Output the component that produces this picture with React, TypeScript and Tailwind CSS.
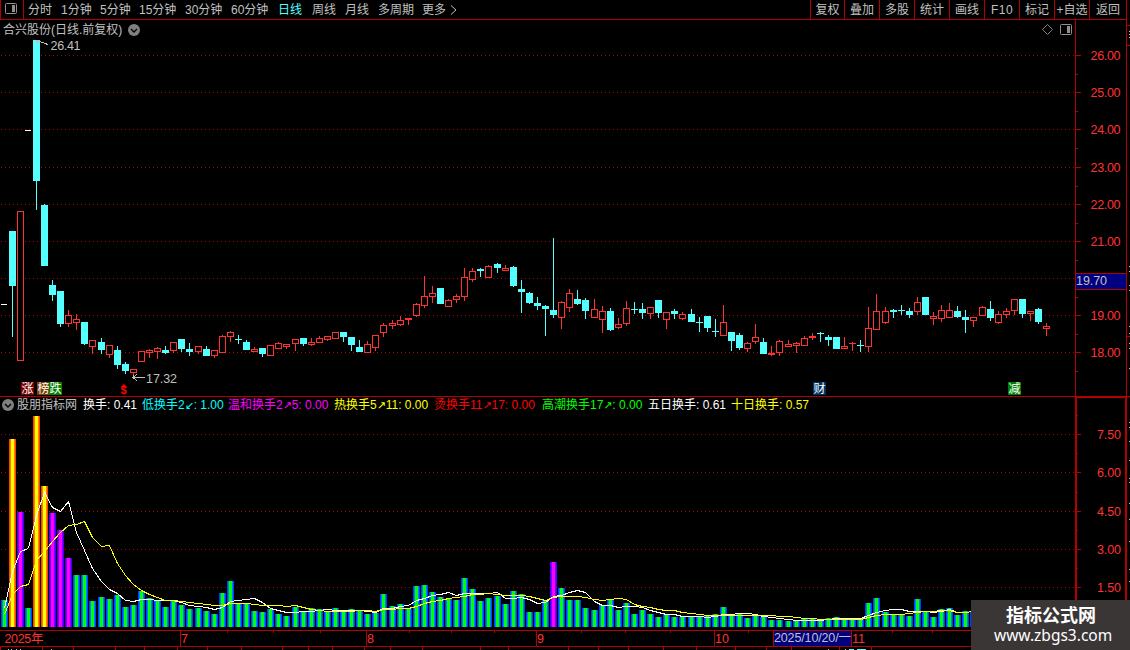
import React from "react";
import clsx from "clsx";

type Candle = {
    up: boolean;
    high: number;
    top: number;
    bottom: number;
    low: number;
};

// 每行: 方向 最高 实体上沿 实体下沿 最低 ("-" 为一字线)
const CANDLE_DATA = `
- 304|d 231 231 286 337|u 211 211 361 361|- 130|d 40 40 181 210|d 204 205 266 266|d 280 285 295 301|d 291 291 324 327
u 310 315 324 327|u 314 319 323 330|d 322 322 344 345|u 340 340 347 354|d 338 342 350 354|u 345 345 355 358|d 346 350 365 369
d 362 364 371 374|u 369 369 373 377|u 351 351 362 362|u 349 350 353 358|u 347 348 352 359|d 346 350 353 354|u 342 342 351 353
d 339 339 349 352|d 343 349 352 356|u 346 346 352 354|d 346 349 356 356|u 350 350 356 358|u 335 336 353 353|u 331 332 337 342
d 335 339 340 344|d 340 342 350 350|u 347 349 352 352|d 348 348 354 357|u 345 345 356 356|u 342 343 349 349|u 344 344 347 349
u 339 339 344 351|d 338 338 344 346|u 338 342 345 346|u 336 338 343 343|u 336 336 340 341|u 332 332 339 339|d 332 332 337 342
d 337 337 345 351|d 340 347 352 352|u 341 344 353 353|u 335 335 348 351|u 323 325 333 337|u 320 323 326 329|u 316 320 325 326
u 318 318 320 325|u 303 304 316 317|u 276 296 306 308|u 286 293 297 303|d 288 288 304 304|u 299 300 307 307|u 294 296 300 303
u 268 277 297 301|u 268 271 280 282|d 268 269 271 277|u 265 266 278 278|d 263 264 268 273|u 265 268 271 271|d 266 267 286 287
d 280 289 292 313|d 292 293 303 304|d 297 303 306 310|d 305 306 309 336|d 238 310 315 318|u 301 302 318 329|u 289 293 308 312
d 290 299 304 305|d 298 300 311 319|u 299 309 318 318|u 306 311 320 333|d 308 311 330 331|u 318 324 328 329|u 301 308 324 326
d 302 309 310 314|d 303 309 313 319|u 307 307 314 319|d 300 300 313 318|u 312 312 320 329|d 309 311 314 319|u 312 314 319 320
d 309 314 322 322|d 317 322 323 332|d 316 316 328 332|d 319 331 332 337|u 305 322 336 336|d 332 332 341 351|d 333 335 348 350
u 342 343 349 352|u 324 337 342 344|d 338 342 354 354|u 346 353 355 356|u 340 341 353 356|u 340 344 347 347|u 342 343 346 353
u 336 338 346 346|u 333 336 338 340|d 332 333 334 342|d 335 337 340 346|d 337 337 349 349|u 337 346 349 349|u 342 343 344 351
d 340 345 346 352|u 307 328 347 352|u 294 311 330 330|u 307 311 323 324|d 309 310 312 318|d 305 310 311 315|d 308 311 315 318
u 297 302 312 315|d 297 297 315 315|u 312 316 319 325|u 305 310 319 322|u 303 310 318 318|d 306 311 317 318|d 310 317 320 333
u 317 317 321 327|u 306 307 316 316|d 301 309 318 321|u 311 314 323 324|u 308 311 315 318|u 299 299 311 315|d 299 299 314 318
u 311 311 314 321|d 308 309 322 324|u 323 326 329 336`;

const candles: (Candle | number)[] = CANDLE_DATA.trim()
    .split(/[|\n]/)
    .map((row) => {
        const [kind, ...n] = row.split(" ");
        if (kind === "-") return Number(n[0]);
        const [high, top, bottom, low] = n.map(Number);
        return { up: kind === "u", high, top, bottom, low };
    });

// 换手柱顶端
const turnover = [
    600, 439, 512, 608, 416, 486, 513, 530, 558, 575, 575, 601, 597, 599, 595, 607, 605, 591, 598, 601,
    607, 601, 605, 609, 608, 611, 614, 593, 581, 603, 603, 611, 612, 609, 614, 616, 607, 611, 608, 609,
    612, 608, 612, 609, 611, 614, 613, 594, 606, 604, 608, 586, 585, 592, 597, 599, 600, 578, 589, 601,
    598, 596, 604, 591, 594, 612, 612, 600, 562, 588, 600, 600, 608, 610, 605, 600, 610, 603, 614, 610,
    614, 617, 614, 617, 617, 617, 617, 616, 614, 607, 614, 614, 618, 615, 617, 620, 620, 621, 620, 619,
    619, 619, 618, 617, 619, 619, 619, 603, 598, 612, 615, 615, 616, 599, 612, 617, 609, 608, 615, 611, 612,
];
const BASE = 627;

// 每12根左右多出1像素
const extra = [12, 24, 36, 48, 61, 73, 85, 97, 109, 121];
const barX = (i: number) => 1 + i * 8 + extra.filter((e) => i >= e).length;

const average = (days: number, head: number[]) =>
    turnover
        .map((_, i) => {
            const y =
                i < head.length
                    ? head[i]
                    : turnover.slice(i - days + 1, i + 1).reduce((a, b) => a + b, 0) / days;
            return `${barX(i) + 3.5},${Math.round(y) + 0.5}`;
        })
        .join(" ");

const ma5 = average(5, [608, 571, 551, 548]);
const ma10 = average(10, [614, 594, 586, 584, 560, 551, 541, 532, 525]);

const barColors = (i: number) => {
    if ([1, 4, 5].includes(i)) return ["#ff4000", "#ff8000", "#ffff00"];
    if ([2, 6, 7, 8, 68].includes(i)) return ["#4000ff", "#8000ff", "#ff00ff"];
    return ["#0040ff", "#0080ff", "#00ff00"];
};

const periods = [
    { name: "分时", box: "w-[33px]" },
    { name: "1分钟", box: "w-[39px]" },
    { name: "5分钟", box: "w-[39px]" },
    { name: "15分钟", box: "w-[46px]" },
    { name: "30分钟", box: "w-[46px]" },
    { name: "60分钟", box: "w-[47px]" },
    { name: "日线", box: "w-[34px] text-[#54ffff]" },
    { name: "周线", box: "w-[33px]" },
    { name: "月线", box: "w-[33px]" },
    { name: "多周期", box: "w-[44px]" },
    { name: "更多", box: "w-[26px]" },
];

const tools = ["复权", "叠加", "多股", "统计", "画线", "F10", "标记", "+自选", "返回"];

const legends = [
    { label: "股朋指标网", box: "w-[66px] text-[#c0c0c0]" },
    { label: "换手: 0.41", box: "w-[59px] text-white" },
    { label: "低换手2↙: 1.00", box: "w-[86px] text-[#00ffff]" },
    { label: "温和换手2↗5: 0.00", box: "w-[106px] text-[#ff00ff]" },
    { label: "热换手5↗11: 0.00", box: "w-[100px] text-[#ffff00]" },
    { label: "烫换手11↗17: 0.00", box: "w-[108px] text-[#ff0000]" },
    { label: "高潮换手17↗: 0.00", box: "w-[106px] text-[#00ff00]" },
    { label: "五日换手: 0.61", box: "w-[83px] text-white" },
    { label: "十日换手: 0.57", box: "w-[80px] text-[#ffff00]" },
];

const priceLines = [55, 92, 129, 167, 204, 241, 278, 315, 352];
const volumeLines = [434, 472, 511, 549, 587];

function GridLine({ y }: { y: number }) {
    return <line x1="1" x2="1075" y1={y + 0.5} y2={y + 0.5} stroke="#b00000" strokeDasharray="1 3" />;
}

function Fold() {
    return (
        <svg width="12" height="12" viewBox="0 0 12 12">
            <circle cx="6" cy="6" r="6" fill="#808080" />
            <path d="M3 5l3 3 3-3" fill="none" stroke="#000" strokeWidth="1.4" />
        </svg>
    );
}

function PanelIcon({ className }: { className?: string }) {
    return (
        <svg className={className} width="12" height="11" viewBox="0 0 12 11">
            <rect x="0.5" y="0.5" width="11" height="10" rx="1" fill="none" stroke="#909090" />
            <rect x="7" y="2" width="3" height="7" fill="#909090" />
        </svg>
    );
}

function Toolbar() {
    return (
        <header className="flex h-5 w-[1127px] border-r border-b border-l border-[#b40000] text-[#c0c0c0]">
            <div className="w-[23px] border-r border-[#b40000] pt-[3px] pl-1">
                <PanelIcon />
            </div>
            <nav className="flex flex-1 items-center pl-1">
                {periods.map((p) => (
                    <span key={p.name} className={p.box}>
                        {p.name}
                    </span>
                ))}
                <svg width="7" height="10" viewBox="0 0 7 10" className="ml-0.5">
                    <path d="M1 0.5l5 4.5-5 4.5" fill="none" stroke="#c0c0c0" />
                </svg>
            </nav>
            {tools.map((t, i) => (
                <div
                    key={t}
                    className={clsx(
                        "flex items-center justify-center border-l border-[#b40000]",
                        i === 0 ? "w-[34px]" : i === 8 ? "w-[37px]" : "w-[35px]",
                        t === "F10" && "tracking-[0.5px]"
                    )}
                >
                    {t}
                </div>
            ))}
        </header>
    );
}

function CandleShape({ item, x }: { item: Candle | number; x: number }) {
    if (typeof item === "number") return <rect x={x} y={item} width="6" height="1" fill="#fff" />;
    const color = item.up ? "#ff3232" : "#54ffff";
    const { high, top, bottom, low } = item;
    return (
        <g fill={color}>
            <rect x={x + 3} y={high} width="1" height={top - high} />
            <rect x={x + 3} y={bottom} width="1" height={low - bottom} />
            {item.up && bottom - top > 2 ? (
                <rect x={x + 0.5} y={top + 0.5} width="6" height={bottom - top - 1} fill="#000" stroke={color} />
            ) : (
                <rect x={x} y={top} width="7" height={bottom - top} />
            )}
        </g>
    );
}

function Mark({ text, className }: { text: string; className: string }) {
    return (
        <span
            className={clsx(
                "absolute top-[362px] flex h-[13px] w-[13px] items-center justify-center text-[12px] leading-none text-white",
                className
            )}
        >
            {text}
        </span>
    );
}

function PricePanel() {
    return (
        <section className="relative flex h-[377px] border-b border-[#b40000]">
            <div className="w-[1075px]">
                <div className="flex h-[19px] items-center gap-[5px] pl-[3px] text-[#c0c0c0]">
                    <span className="w-[120px]">合兴股份(日线.前复权)</span>
                    <Fold />
                    <svg width="11" height="11" viewBox="0 0 11 11" className="ml-auto">
                        <path d="M5.5 0.5l5 5-5 5-5-5z" fill="none" stroke="#808080" />
                    </svg>
                    <PanelIcon className="mr-[3px] ml-[2px]" />
                </div>
                <svg width="1075" height="357" viewBox="0 39 1075 357" className="block">
                    <g shapeRendering="crispEdges">
                        {priceLines.map((y) => (
                            <GridLine key={y} y={y} />
                        ))}
                        {candles.map((c, i) => (
                            <CandleShape key={i} item={c} x={barX(i)} />
                        ))}
                    </g>
                    <g fill="none" stroke="#c0c0c0" shapeRendering="crispEdges">
                        <path d="M38 41l10 3.5M36 40.500h4M37.500 40v4" />
                        <path d="M133 377.500h12M137 374l-4 3.500 4 3.500M133.500 375v4" />
                    </g>
                    <g fill="#c0c0c0" fontSize="12.500">
                        <text x="50.500" y="50" textLength="30">26.41</text>
                        <text x="146" y="383" textLength="31">17.32</text>
                    </g>
                    <text x="120.500" y="393.500" fill="#ff0000" fontSize="11" fontWeight="bold">$</text>
                    <path d="M121 387l3-3 3 3z" fill="#ff0000" />
                </svg>
            </div>
            <svg width="55" height="376" viewBox="1075 20 55 376" className="block" fill="#ff3232">
                <g fill="#b40000">
                    <rect x="1075" y="20" width="1" height="376" />
                    <rect x="1126" y="20" width="1" height="376" />
                    {priceLines.map((y) => (
                        <React.Fragment key={y}>
                            <rect x="1076" y={y} width="5" height="1" />
                            <rect x="1076" y={y + 19} width="2" height="1" />
                        </React.Fragment>
                    ))}
                    <rect x="1127" y="25" width="3" height="1" />
                    <rect x="1127" y="45" width="3" height="1" />
                    <rect x="1127" y="336" width="3" height="1" />
                </g>
                <g fill="#c0c0c0">
                    {[31, 34, 37, 266, 271, 285, 290, 326, 333, 343, 348, 368].map((y) => (
                        <rect key={y} x="1129" y={y} width="1" height="1" />
                    ))}
                </g>
                {priceLines.map((y, i) =>
                    i === 6 ? null : (
                        <text key={y} x="1090.500" y={y + 5} fontSize="12.500" textLength="30">
                            {(26 - i).toFixed(2)}
                        </text>
                    )
                )}
                <rect x="1075.500" y="273.500" width="51" height="16" fill="#000080" stroke="#b40000" />
                <text x="1076" y="285" fill="#c0c0c0" fontSize="12.500" textLength="31">19.70</text>
            </svg>
            <Mark text="涨" className="left-[21px] bg-[#800000]" />
            <Mark text="榜" className="left-[37px] bg-[#804000]" />
            <Mark text="跌" className="left-[49px] bg-[#008000]" />
            <Mark text="财" className="left-[813px] bg-[#003264]" />
            <Mark text="减" className="left-[1008px] bg-[#008000]" />
        </section>
    );
}

// 箭头单独收窄
function LegendText({ text }: { text: string }) {
    return (
        <>
            {text.split(/([↗↙])/).map((part, i) =>
                part === "↗" || part === "↙" ? (
                    <span key={i} className="inline-block w-[9px] text-center font-['DejaVu_Sans'] text-[11px]">
                        {part}
                    </span>
                ) : (
                    part
                )
            )}
        </>
    );
}

function TurnoverPanel() {
    return (
        <section className="flex h-[233px]">
            <div className="w-[1075px]">
                <div className="flex h-4 items-center pl-0.5">
                    <span className="w-[15px]">
                        <Fold />
                    </span>
                    {legends.map((l) => (
                        <span key={l.label} className={clsx("h-3", l.box)}>
                            <LegendText text={l.label} />
                        </span>
                    ))}
                </div>
                <svg width="1075" height="217" viewBox="0 413 1075 217" className="block" shapeRendering="crispEdges">
                    {volumeLines.map((y) => (
                        <GridLine key={y} y={y} />
                    ))}
                    {turnover.map((y, i) => {
                        const [edge, mid, core] = barColors(i);
                        const x = barX(i);
                        return (
                            <g key={i}>
                                <rect x={x} y={y} width="7" height={BASE - y} fill={edge} />
                                <rect x={x + 1} y={y} width="5" height={BASE - y} fill={mid} />
                                <rect x={x + 2} y={y} width="3" height={BASE - y} fill={core} />
                            </g>
                        );
                    })}
                    <polyline points={ma5} fill="none" stroke="#fff" />
                    <polyline points={ma10} fill="none" stroke="#ffff00" />
                </svg>
            </div>
            <svg width="55" height="233" viewBox="1075 397 55 233" className="block">
                <g fill="#b40000">
                    <rect x="1075" y="397" width="2" height="233" />
                    <rect x="1125" y="397" width="2" height="233" />
                    <rect x="1075" y="397" width="52" height="1" />
                    {volumeLines.map((y) => (
                        <React.Fragment key={y}>
                            <rect x="1077" y={y} width="4" height="1" />
                            <rect x="1077" y={y - 19} width="1" height="1" />
                        </React.Fragment>
                    ))}
                </g>
                {volumeLines.map((y, i) => (
                    <text key={y} x="1097" y={y + 5} fill="#ff3232" fontSize="12.500" textLength="24">
                        {(7.5 - i * 1.5).toFixed(2)}
                    </text>
                ))}
                <g fill="#c0c0c0">
                    {[422, 427, 441, 460, 478, 482, 503, 519, 541, 569, 581].map((y) => (
                        <rect key={y} x="1129" y={y} width="1" height="1" />
                    ))}
                </g>
            </svg>
        </section>
    );
}

function TimeAxis() {
    return (
        <svg width="1130" height="20" viewBox="0 630 1130 20" className="block" fill="#ff3232" fontSize="12.500">
            <g fill="#b40000">
                <rect x="0" y="630" width="1130" height="1" />
                <rect x="0" y="646" width="1130" height="1" />
                {[180, 366, 536, 714].map((x) => (
                    <rect key={x} x={x} y="630" width="1" height="16" />
                ))}
                {[227, 273, 320, 409, 451, 494, 581, 625, 670, 748, 892, 932].map((x) => (
                    <rect key={x} x={x} y="631" width="1" height="2" />
                ))}
                {[
                    0, 42, 73, 115, 144, 177, 207, 241, 282, 308, 332, 364, 390, 422, 480, 508, 568, 598, 628, 663,
                    696, 735, 766, 791, 839, 871,
                ].map((x) => (
                    <rect key={x} x={x} y="647" width="1" height="3" />
                ))}
            </g>
            <rect x="773.500" y="630.500" width="78" height="16" fill="#000080" stroke="#b40000" />
            <text x="4.500" y="643" textLength="39">2025年</text>
            <text x="181" y="643">7</text>
            <text x="367" y="643">8</text>
            <text x="537" y="643">9</text>
            <text x="715" y="643" textLength="14">10</text>
            <text x="852" y="643" textLength="13">11</text>
            <text x="774" y="642" fill="#c0c0c0" textLength="77">2025/10/20/一</text>
            {/* 下一行露出的顶部 */}
            <g fill="#c0c0c0">
                {[8, 11, 16, 20, 51, 828].map((x) => (
                    <rect key={x} x={x} y="649" width="1" height="1" />
                ))}
                <g fill="#54ffff">
                    <rect x="845" y="649" width="1" height="1" />
                    <rect x="849" y="649" width="5" height="1" />
                    <rect x="857" y="649" width="9" height="1" />
                </g>
            </g>
        </svg>
    );
}

export default function App() {
    return (
        <div className="relative h-[650px] w-[1130px] overflow-hidden bg-black font-['Liberation_Sans','Noto_Sans_CJK_SC',sans-serif] text-[12px] leading-none whitespace-nowrap">
            <Toolbar />
            <PricePanel />
            <TurnoverPanel />
            <TimeAxis />

            {/* 水印 */}
            <div className="absolute top-[600px] left-[971px] flex h-[50px] w-[159px] flex-col items-start bg-[#3a3636] pt-[7px] text-white">
                <span className="ml-[35px] text-[18px] leading-[19px] font-bold">指标公式网</span>
                <span className="ml-[23px] font-['Noto_Sans','Open_Sans',sans-serif] text-[15.5px] leading-[19px]">
                    www.zbgs3.com
                </span>
            </div>
        </div>
    );
}
